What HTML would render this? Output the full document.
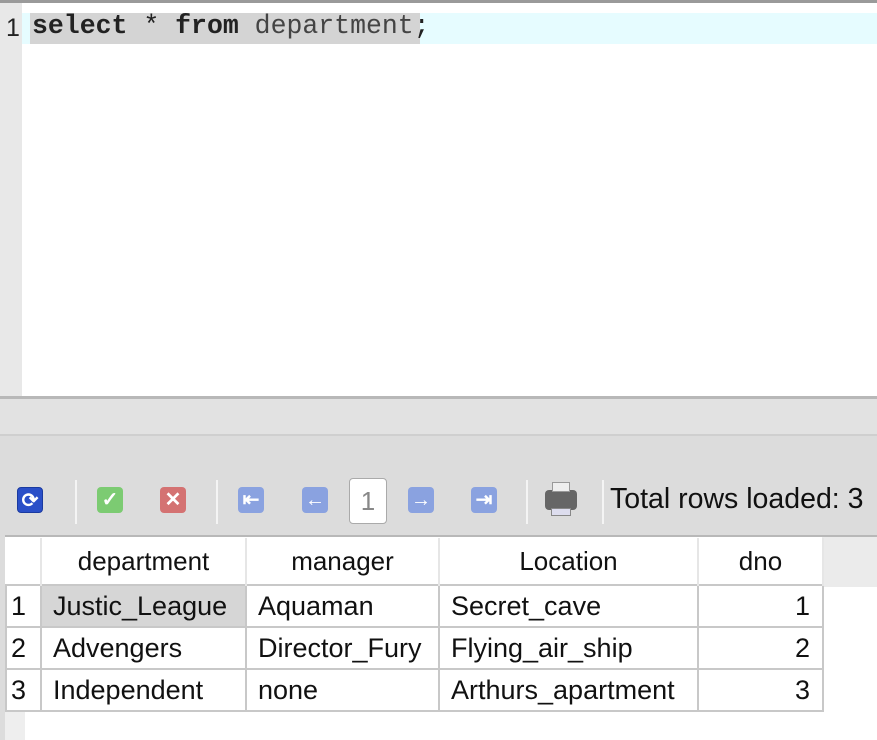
<!DOCTYPE html>
<html><head><style>
*{margin:0;padding:0;box-sizing:border-box}
body{width:877px;height:740px;overflow:hidden;background:#dcdcdc;font-family:"Liberation Sans",sans-serif;position:relative}
.a{position:absolute}
.ic{position:absolute;top:487px;width:26px;height:26px;border-radius:4px;color:#fff;font-weight:bold;font-size:20px;text-align:center;line-height:26px}
.sep{position:absolute;top:480px;width:2px;height:44px;background:#f4f4f4}
table{position:absolute;left:5px;top:538px;border-collapse:collapse;font-size:27px;color:#111;table-layout:fixed}
td{height:42px;border:2px solid #c8c8c8;padding:0 6px 0 11px;background:#fff;white-space:nowrap;overflow:hidden}
th{height:47px;font-weight:normal;background:#fff;border:none;border-right:2px solid #e6e6e6;font-size:26px}
</style></head><body>
<div class="a" style="left:0;top:0;width:877px;height:3px;background:#9a9a9a"></div>
<div class="a" style="left:0;top:3px;width:877px;height:393px;background:#fff"></div>
<div class="a" style="left:0;top:3px;width:22px;height:393px;background:#e8e8e8"></div>
<div class="a" style="left:22px;top:13px;width:855px;height:31px;background:#e6fcff"></div>
<div class="a" style="left:30px;top:13px;width:390px;height:31px;background:#d4d4d4"></div>
<div class="a" style="left:6px;top:14px;font-size:25px;color:#222">1</div>
<div class="a" style="left:32px;top:11px;font-family:'Liberation Mono',monospace;font-size:26.5px;color:#222;white-space:pre"><b>select</b> * <b>from</b> <span style="color:#444">department</span>;</div>
<div class="a" style="left:0;top:396px;width:877px;height:3px;background:#b8b8b8"></div>
<div class="a" style="left:0;top:399px;width:877px;height:35px;background:#e2e2e2"></div>
<div class="a" style="left:0;top:434px;width:877px;height:2px;background:#cfcfcf"></div>
<div class="ic" style="left:17px;background:#2a4fc8;border:1px solid #1a3aa0">⟳</div>
<div class="sep" style="left:75px"></div>
<div class="ic" style="left:97px;background:#7ccb72">✓</div>
<div class="ic" style="left:160px;background:#d47272">✕</div>
<div class="sep" style="left:216px"></div>
<div class="ic" style="left:238px;background:#8aa2e0">⇤</div>
<div class="ic" style="left:302px;background:#8aa2e0">←</div>
<div class="a" style="left:349px;top:478px;width:38px;height:46px;background:#fff;border:1px solid #aaa;border-radius:4px;font-size:26px;color:#888;text-align:center;line-height:44px">1</div>
<div class="ic" style="left:408px;background:#8aa2e0">→</div>
<div class="ic" style="left:471px;background:#8aa2e0">⇥</div>
<div class="sep" style="left:526px"></div>
<div class="a" style="left:545px;top:490px;width:32px;height:20px;background:#666;border-radius:4px"></div>
<div class="a" style="left:552px;top:482px;width:18px;height:10px;background:#eee;border:1px solid #999"></div>
<div class="a" style="left:551px;top:508px;width:20px;height:8px;background:#dde;border:1px solid #888"></div>
<div class="sep" style="left:602px"></div>
<div class="a" style="left:610px;top:483px;font-size:28.5px;color:#111;white-space:nowrap">Total rows loaded: 3</div>
<div class="a" style="left:5px;top:535px;width:872px;height:205px;background:#fff;border-top:2px solid #b8b8b8"></div>
<div class="a" style="left:822px;top:537px;width:55px;height:50px;background:#ebebeb"></div>
<div class="a" style="left:5px;top:712px;width:20px;height:28px;background:#eee"></div>
<table>
<colgroup><col style="width:35px"><col style="width:205px"><col style="width:193px"><col style="width:259px"><col style="width:125px"></colgroup>
<tr><th></th><th>department</th><th>manager</th><th>Location</th><th>dno</th></tr>
<tr><td style="padding:0 4px">1</td><td style="background:#d6d6d6">Justic_League</td><td>Aquaman</td><td>Secret_cave</td><td style="text-align:right;padding-right:12px">1</td></tr>
<tr><td style="padding:0 4px">2</td><td>Advengers</td><td>Director_Fury</td><td>Flying_air_ship</td><td style="text-align:right;padding-right:12px">2</td></tr>
<tr><td style="padding:0 4px">3</td><td>Independent</td><td>none</td><td>Arthurs_apartment</td><td style="text-align:right;padding-right:12px">3</td></tr>
</table>
</body></html>
